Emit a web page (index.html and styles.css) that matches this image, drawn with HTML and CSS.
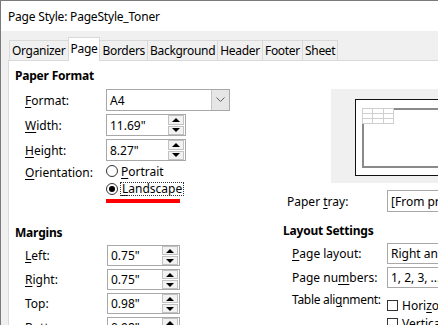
FILE: index.html
```html
<!DOCTYPE html>
<html lang="en">
<head>
  <meta charset="UTF-8" />
  <title>Page Style: PageStyle_Toner</title>
  <link rel="stylesheet" href="styles.css">
</head>
<body>
  <div class="window">
    <div class="titlebar">Page Style: PageStyle_Toner</div>

    <div class="tabs">
      <div class="tab">Organizer</div>
      <div class="tab active">Page</div>
      <div class="tab">Borders</div>
      <div class="tab">Background</div>
      <div class="tab">Header</div>
      <div class="tab">Footer</div>
      <div class="tab">Sheet</div>
    </div>

    <div class="panel">
      <section class="col col-left">
        <div class="heading">Paper Format</div>
        <div class="form form-paper">
          <span class="lbl"><u>F</u>ormat:</span>
          <div class="combo">
            <span class="val">A4</span>
            <span class="drop">
              <svg width="9" height="6" viewBox="0 0 9 6"><polyline points="0.5,0.5 4.5,4.5 8.5,0.5" fill="none" stroke="#606060" stroke-width="1"/></svg>
            </span>
          </div>

          <span class="lbl"><u>W</u>idth:</span>
          <div class="spin">
            <span class="val">11.69"</span>
            <span class="arrows"><span class="btn up"></span><span class="btn down"></span></span>
          </div>

          <span class="lbl"><u>H</u>eight:</span>
          <div class="spin">
            <span class="val">8.27"</span>
            <span class="arrows"><span class="btn up"></span><span class="btn down"></span></span>
          </div>

          <span class="lbl lbl-top"><u>O</u>rientation:</span>
          <div class="radios">
            <div class="radio"><span class="dot"></span><span><u>P</u>ortrait</span></div>
            <div class="radio checked"><span class="dot"></span><span class="focus"><u>L</u>andscape</span></div>
            <div class="redline"></div>
          </div>
        </div>

        <div class="heading heading-margins">Margins</div>
        <div class="form form-margins">
          <span class="lbl"><u>L</u>eft:</span>
          <div class="spin">
            <span class="val">0.75"</span>
            <span class="arrows"><span class="btn up"></span><span class="btn down"></span></span>
          </div>

          <span class="lbl"><u>R</u>ight:</span>
          <div class="spin">
            <span class="val">0.75"</span>
            <span class="arrows"><span class="btn up"></span><span class="btn down"></span></span>
          </div>

          <span class="lbl">Top:</span>
          <div class="spin">
            <span class="val">0.98"</span>
            <span class="arrows"><span class="btn up"></span><span class="btn down"></span></span>
          </div>

          <span class="lbl"><u>B</u>ottom:</span>
          <div class="spin">
            <span class="val">0.98"</span>
            <span class="arrows"><span class="btn up"></span><span class="btn down"></span></span>
          </div>
        </div>
      </section>

      <section class="col col-right">
        <div class="preview">
          <div class="sheet">
            <div class="print-area">
              <div class="cells">
                <span></span><span></span><span></span>
                <span></span><span></span><span></span>
                <span></span><span></span><span></span>
              </div>
            </div>
          </div>
        </div>

        <div class="form form-tray">
          <span class="lbl">Paper <u>t</u>ray:</span>
          <div class="field"><span class="val">[From printer settings]</span></div>
        </div>

        <div class="heading heading-layout">Layout Settings</div>
        <div class="form form-layout">
          <span class="lbl"><u>P</u>age layout:</span>
          <div class="field"><span class="val">Right and left</span></div>

          <span class="lbl">Page nu<u>m</u>bers:</span>
          <div class="field"><span class="val">1, 2, 3, ...</span></div>

          <span class="lbl lbl-top">Table ali<u>g</u>nment:</span>
          <div class="checks">
            <div class="check"><span class="box"></span><span>Hori<u>z</u>ontal</span></div>
            <div class="check"><span class="box"></span><span>Vertical</span></div>
          </div>
        </div>
      </section>
    </div>
  </div>
</body>
</html>
```

FILE: styles.css
```css
* {
  box-sizing: border-box;
}
body {
  margin: 0;
  width: 438px;
  height: 325px;
  overflow: hidden;
  background: #f0f0f0;
  font-family: "Noto Sans", sans-serif;
  font-size: 12px;
  color: #000;
}
u {
  text-decoration-thickness: 1px;
  text-underline-offset: 2px;
}
.window {
  height: 325px;
  border-top: 1px solid #7a7a7a;
  border-left: 1px solid #7a7a7a;
  display: flex;
  flex-direction: column;
}
.titlebar {
  height: 30px;
  flex: none;
  background: #fff;
  padding-left: 7px;
  letter-spacing: -0.2px;
  display: flex;
  align-items: center;
}
.tabs {
  height: 29px;
  flex: none;
  display: flex;
  align-items: flex-end;
  padding-left: 8px;
}
.tab {
  height: 20px;
  line-height: 19px;
  padding: 0 2px;
  border: 1px solid #d9d9d9;
  border-bottom: none;
  margin-right: -1px;
  white-space: nowrap;
  letter-spacing: -0.3px;
}
.tab.active {
  height: 24px;
  line-height: 22px;
  background: #fff;
  margin-bottom: -1px;
  position: relative;
  z-index: 1;
}
.panel {
  flex: 1;
  margin-left: 7px;
  background: #fff;
  border-top: 1px solid #d9d9d9;
  border-left: 1px solid #d9d9d9;
  display: flex;
}
.col-left {
  width: 274px;
  flex: none;
  padding: 7px 0 0 6px;
}
.col-right {
  flex: 1;
  padding-top: 28px;
}
.heading {
  font-weight: bold;
  line-height: 16px;
  height: 16px;
  letter-spacing: -0.2px;
}
.form {
  display: grid;
  align-items: center;
}
.lbl {
  white-space: nowrap;
}
.lbl-top {
  align-self: start;
}
.val {
  padding-left: 3px;
  white-space: nowrap;
}

/* paper format */
.form-paper {
  margin-top: 5px;
  padding-left: 10px;
  grid-template-columns: 81px auto;
  grid-auto-rows: 22px;
  row-gap: 3px;
}
.form-paper .spin {
  width: 80px;
}
.combo,
.spin,
.field {
  height: 22px;
  border: 1px solid #a8a8a8;
  display: flex;
  align-items: center;
  background: #fff;
}
.combo {
  width: 124px;
  justify-content: space-between;
}
.drop {
  width: 18px;
  height: 20px;
  background: #e6e6e6;
  border-left: 1px solid #c4c4c4;
  display: flex;
  align-items: center;
  justify-content: center;
}
.spin {
  justify-content: space-between;
}
.arrows {
  width: 17px;
  height: 20px;
  display: flex;
  flex-direction: column;
  gap: 1px;
  padding: 0 1px 0 0;
}
.btn {
  flex: 1;
  border: 1px solid #c2c2c2;
  background: #f2f2f2;
  display: flex;
  align-items: center;
  justify-content: center;
}
.btn::after {
  content: "";
  border-left: 4px solid transparent;
  border-right: 4px solid transparent;
}
.btn.up::after {
  border-bottom: 4px solid #000;
}
.btn.down::after {
  border-top: 4px solid #000;
}

/* orientation */
.radios {
  grid-row: span 2;
  align-self: start;
  display: flex;
  flex-direction: column;
  gap: 4px;
}
.radio {
  height: 14px;
  display: flex;
  align-items: center;
  gap: 3px;
}
.dot {
  width: 12px;
  height: 12px;
  border: 1px solid #333;
  border-radius: 50%;
  background: #fff;
  flex: none;
  display: flex;
  align-items: center;
  justify-content: center;
}
.radio.checked .dot::after {
  content: "";
  width: 6px;
  height: 6px;
  border-radius: 50%;
  background: #000;
}
.focus {
  outline: 1px dotted #333;
  line-height: 12px;
  padding: 0 1px;
}
.redline {
  width: 74px;
  height: 4px;
  background: #ff0000;
  margin-top: -1px;
}

/* margins */
.heading-margins {
  margin-top: 14px;
}
.form-margins {
  margin-top: 4px;
  padding-left: 10px;
  grid-template-columns: 82px auto;
  grid-auto-rows: 21px;
  row-gap: 3px;
}
.form-margins .spin {
  width: 73px;
  height: 21px;
}
.form-margins .arrows {
  height: 19px;
}

/* preview */
.preview {
  margin-left: 48px;
  height: 94px;
  background: #f0f0f0;
  padding: 10px 0 7px 24px;
}
.sheet {
  height: 77px;
  background: #fff;
  border: 1px solid #111;
  border-right: none;
  padding: 8px 0 7px 6px;
}
.print-area {
  height: 60px;
  border: 2px solid #8a8a8a;
  border-right: none;
}
.cells {
  margin: -2px 0 0 -2px;
  width: 32px;
  display: grid;
  grid-template-columns: repeat(3, 1fr);
  grid-auto-rows: 5px;
  border-top: 1px solid #cfcfcf;
  border-left: 1px solid #cfcfcf;
  background: #fff;
}
.cells span {
  border-right: 1px solid #cfcfcf;
  border-bottom: 1px solid #cfcfcf;
}

/* right forms */
.form-tray {
  margin-top: 7px;
  padding-left: 4px;
  grid-template-columns: 100px auto;
  grid-auto-rows: 22px;
}
.field {
  width: 140px;
}
.heading-layout {
  margin-top: 11px;
}
.form-layout {
  margin-top: 4px;
  padding-left: 9px;
  grid-template-columns: 95px auto;
  grid-auto-rows: 21px;
  row-gap: 3px;
}
.form-layout .field {
  height: 21px;
}
.form-layout .lbl-top {
  line-height: 17px;
  letter-spacing: -0.3px;
}
.checks {
  grid-row: span 2;
  display: flex;
  flex-direction: column;
  gap: 4px;
  padding-top: 1px;
}
.check {
  height: 14px;
  display: flex;
  align-items: center;
  gap: 4px;
}
.box {
  width: 11px;
  height: 11px;
  border: 1px solid #333;
  background: #fff;
  flex: none;
}
```
